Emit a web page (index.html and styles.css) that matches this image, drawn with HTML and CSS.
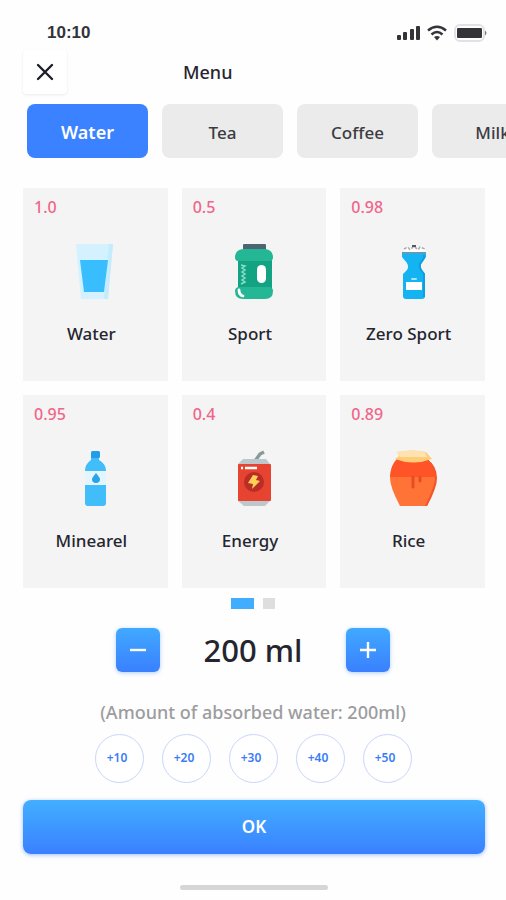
FILE: index.html
```html
<!DOCTYPE html>
<html lang="en">
<head>
	<meta charset="UTF-8">
	<meta name="viewport" content="width=device-width, initial-scale=1.0">
	<title>Menu</title>
	<link rel="stylesheet" href="styles.css">
</head>
<body>

	<!-- Status bar -->
	<div class="status-bar">
		<span class="time">10:10</span>
		<svg class="status-icons" width="92" height="18" viewBox="0 0 92 18" aria-hidden="true">
			<g fill="#333338">
				<rect x="1" y="11" width="4" height="5" rx="1"/>
				<rect x="7" y="8" width="4" height="8" rx="1"/>
				<rect x="14" y="5" width="4" height="11" rx="1"/>
				<rect x="20" y="2" width="4" height="14" rx="1"/>
			</g>
			<g fill="none" stroke="#333338" stroke-width="2.6">
				<path d="M32 6.5Q41 -1 50 6.5"/>
				<path d="M35.5 10.5Q41 5.5 46.5 10.5"/>
			</g>
			<path d="M38 13Q41 11 44 13L41 16.500Z" fill="#333338"/>
			<rect x="59" y="1" width="29" height="16" rx="5" fill="#fff" stroke="#e2e2e6" stroke-width="2"/>
			<rect x="61" y="4" width="25" height="10" rx="1" fill="#333338"/>
			<path d="M89 6.500Q92 9 89 11.500Z" fill="#77777c"/>
		</svg>
	</div>

	<!-- Header -->
	<div class="header">
		<button class="close-btn" aria-label="Close">
			<svg width="18" height="18" viewBox="0 0 18 18"><path d="M2 2L16 16M16 2L2 16" stroke="#1f1f2b" stroke-width="2.400" stroke-linecap="round"/></svg>
		</button>
		<h1>Menu</h1>
	</div>

	<!-- Categories -->
	<div class="tabs">
		<button class="tab active">Water</button>
		<button class="tab">Tea</button>
		<button class="tab">Coffee</button>
		<button class="tab">Milk</button>
	</div>

	<!-- Drinks -->
	<div class="drinks">
		<button class="drink">
			<span class="ratio">1.0</span>
			<svg class="drink-icon" viewBox="0 0 56 56">
				<path d="M9 1H46L41 56H14Z" fill="#d3f1ff"/>
				<path d="M42 1H46L41 56H37Z" fill="#c4ecfd"/>
				<path d="M13 17H41L37 49H17Z" fill="#38bdff"/>
			</svg>
			<span class="name">Water</span>
		</button>
		<button class="drink">
			<span class="ratio">0.5</span>
			<svg class="drink-icon" viewBox="0 0 56 56">
				<rect x="17" y="1" width="23" height="8" rx="1" fill="#4d6570"/>
				<rect x="12" y="12" width="34" height="36" fill="#14a382"/>
				<path d="M17 6H39Q47 7 47 14Q47 18 44 18H12Q9 18 9 14Q9 7 17 6Z" fill="#23b795"/>
				<path d="M12 44H44Q47 45 47 48Q47 56 39 56H17Q9 56 9 48Q9 45 12 44Z" fill="#23b795"/>
				<rect x="31" y="22" width="9" height="18" rx="4.500" fill="#fff"/>
				<path d="M15 22L19 23L16 25L19 27L16 29L19 31L16 33L19 35L16 37L19 39L15 41" fill="none" stroke="#8ae0cd" stroke-width="1.500"/>
				<path d="M13 47Q13 52 17 53" fill="none" stroke="#fff" stroke-width="2.800" stroke-linecap="round"/>
			</svg>
			<span class="name">Sport</span>
		</button>
		<button class="drink">
			<span class="ratio">0.98</span>
			<svg class="drink-icon" viewBox="0 0 56 56">
				<path d="M18 9H41L39 5H20Z" fill="#fff"/>
				<path d="M19 6L23 4L25 7L29 3L33 7L35 4L40 6" fill="none" stroke="#a8abad" stroke-width="1.500" stroke-dasharray="3 2"/>
				<path d="M27 3H31" stroke="#55585c" stroke-width="2"/>
				<path d="M17 9H41V14L36 21Q35 24 37 27L40 31V53Q40 56 37 56H21Q18 56 18 53V31L22 27Q24 24 22 20L17 14Z" fill="#14b4f3"/>
				<path d="M39 12V15L35 21Q34 24 36 27L39 31V54" fill="none" stroke="#0d9fdf" stroke-width="2"/>
				<rect x="17" y="9" width="24" height="2" fill="#5a9dbd"/>
				<rect x="21" y="39" width="16" height="8" fill="#fff"/>
				<rect x="26" y="35" width="6" height="2" rx="1" fill="#a7e4fa"/>
			</svg>
			<span class="name">Zero Sport</span>
		</button>
		<button class="drink">
			<span class="ratio">0.95</span>
			<svg class="drink-icon" viewBox="0 0 56 56">
				<path d="M24 7H32V10Q39 14 39 21V53Q39 56 36 56H21Q18 56 18 53V21Q18 14 24 10Z" fill="#41bdf9"/>
				<rect x="24" y="1" width="9" height="7" rx="1.500" fill="#219ee6"/>
				<rect x="18" y="21" width="21" height="14" fill="#e3f6ff"/>
				<path d="M29 23Q25 28 25 29A4 4 0 0 0 33 29Q33 28 29 23Z" fill="#28a4ea"/>
			</svg>
			<span class="name">Minearel</span>
		</button>
		<button class="drink">
			<span class="ratio">0.4</span>
			<svg class="drink-icon" viewBox="0 0 56 56">
				<path d="M29 11L34 4L38 2" fill="none" stroke="#879b9c" stroke-width="3.500"/>
				<path d="M17 9H40L44 14V51L39 56H18L12 51V14Z" fill="#bdc8cc"/>
				<rect x="12" y="14" width="33" height="37" rx="1" fill="#e64431"/>
				<circle cx="28" cy="32" r="10" fill="#b92d26"/>
				<path d="M27 25L22 33L27 34L26 39L34 31L30 30L32 26Z" fill="#ffd057"/>
				<path d="M15 18H17M19 18H31" stroke="#fff" stroke-width="2.500"/>
			</svg>
			<span class="name">Energy</span>
		</button>
		<button class="drink">
			<span class="ratio">0.89</span>
			<svg class="drink-icon" viewBox="0 0 56 56">
				<path d="M12 9H42Q51 16 51 28Q51 37 42 56H15Q5 37 5 28Q5 16 12 9Z" fill="#ff7436"/>
				<path d="M12 9H42Q51 16 51 27H5Q6 15 12 9Z" fill="#ff5428"/>
				<path d="M42 10Q51 17 50 29Q49 38 40 56H42Q52 38 52 28Q52 16 42 9Z" fill="#f5542a"/>
				<path d="M28 27V37M35 27V31" stroke="#eb4b24" stroke-width="3" stroke-linecap="round"/>
				<path d="M12 2Q28 -1 41 2L47 9Q28 16 10 9L14 6Z" fill="#ffcc79"/>
				<path d="M12 2Q28 -1 40 2L42 7H15Z" fill="#fee3b1"/>
			</svg>
			<span class="name">Rice</span>
		</button>
	</div>

	<!-- Pager -->
	<div class="pager">
		<span class="dot current"></span>
		<span class="dot"></span>
	</div>

	<!-- Amount -->
	<div class="stepper">
		<button class="step-btn" aria-label="Less">
			<svg width="18" height="18" viewBox="0 0 18 18"><path d="M1 9H17" stroke="#fff" stroke-width="2.400"/></svg>
		</button>
		<output class="amount">200 ml</output>
		<button class="step-btn" aria-label="More">
			<svg width="18" height="18" viewBox="0 0 18 18"><path d="M1 9H17M9 1V17" stroke="#fff" stroke-width="2.400"/></svg>
		</button>
	</div>
	<p class="absorbed">(Amount of absorbed water: 200ml)</p>

	<div class="quick-add">
		<button>+10</button>
		<button>+20</button>
		<button>+30</button>
		<button>+40</button>
		<button>+50</button>
	</div>

	<div class="footer">
		<button class="ok-btn">OK</button>
		<div class="home-bar"></div>
	</div>

</body>
</html>
```
FILE: styles.css
```css
* {
	box-sizing: border-box;
}

body {
	margin: 0;
	background-color: #fefefe;
	color: #25252f;
	font-family: "Noto Sans", sans-serif;
	font-size: 17px;
	overflow-x: hidden;
}

button {
	border: none;
	padding: 0;
	font-family: inherit;
	font-size: inherit;
	color: inherit;
	cursor: pointer;
}

svg {
	display: block;
}

/* Status bar */
.status-bar {
	display: flex;
	justify-content: space-between;
	align-items: center;
	height: 50px;
	padding: 16px 18px 0 47px;
}

.time {
	font-family: "Liberation Sans", sans-serif;
	font-weight: bold;
	color: #333338;
}

/* Header */
.header {
	display: flex;
	align-items: center;
	gap: 116px;
	padding: 0 23px;
}

.close-btn {
	display: flex;
	justify-content: center;
	align-items: center;
	width: 44px;
	height: 44px;
	border-radius: 4px;
	background-color: #fff;
	box-shadow: 0 1px 3px rgba(0, 0, 0, 0.08);
}

h1 {
	margin: 0;
	font-size: 18px;
	font-weight: 500;
}

/* Categories */
.tabs {
	display: flex;
	gap: 14px;
	padding: 10px 0 0 27px;
	overflow: hidden;
}

.tab {
	flex: 0 0 121px;
	height: 54px;
	padding-top: 2px;
	border-radius: 8px;
	background-color: #ebebeb;
	color: #3b3b42;
	font-weight: 500;
}

.tab.active {
	background-color: #3a82ff;
	color: #fff;
	font-size: 18px;
	font-weight: 600;
}

/* Drinks */
.drinks {
	display: grid;
	grid-template-columns: repeat(3, 1fr);
	gap: 14px;
	padding: 30px 21px 0 23px;
}

.drink {
	display: flex;
	flex-direction: column;
	align-items: center;
	min-height: 193px;
	padding: 8px 11px;
	background-color: #f4f4f4;
}

.ratio {
	align-self: flex-start;
	line-height: 22px;
	font-size: 16px;
	font-weight: 500;
	color: #f0668a;
}

.drink-icon {
	width: 56px;
	height: 56px;
	margin: 25px 0 23px;
}

.name {
	padding-right: 8px;
	line-height: 24px;
	font-weight: 500;
	white-space: nowrap;
}

/* Pager */
.pager {
	display: flex;
	justify-content: center;
	gap: 9px;
	padding-top: 10px;
}

.dot {
	width: 12px;
	height: 11px;
	background-color: #dedede;
}

.dot.current {
	width: 23px;
	background-color: #40adff;
}

/* Amount */
.stepper {
	display: flex;
	justify-content: center;
	align-items: center;
	padding-top: 19px;
}

.step-btn {
	display: flex;
	justify-content: center;
	align-items: center;
	width: 44px;
	height: 44px;
	border-radius: 6px;
	background: linear-gradient(#40a9ff, #3a80ff);
	box-shadow: 0 1px 4px rgba(58, 130, 255, 0.4);
}

.amount {
	width: 186px;
	font-size: 31px;
	line-height: 40px;
	font-weight: 500;
	text-align: center;
}

.absorbed {
	margin: 28px 0 10px;
	line-height: 24px;
	font-size: 18px;
	font-weight: 500;
	color: #9c9c9f;
	text-align: center;
}

.quick-add {
	display: flex;
	justify-content: center;
	gap: 18px;
}

.quick-add button {
	width: 49px;
	height: 49px;
	padding: 0 4px 3px 0;
	border: 1px solid #c9d5fb;
	border-radius: 50%;
	background-color: #fff;
	color: #3a7cf5;
	font-size: 12px;
	font-weight: 600;
}

/* Footer */
.footer {
	padding: 17px 21px 10px 23px;
}

.ok-btn {
	display: block;
	width: 100%;
	height: 54px;
	padding-bottom: 2px;
	border-radius: 8px;
	background: linear-gradient(to top, #3a80ff, #42afff);
	box-shadow: 0 1px 4px rgba(58, 130, 255, 0.5);
	color: #fff;
	font-weight: 600;
}

.home-bar {
	width: 148px;
	height: 5px;
	margin: 31px auto 0;
	border-radius: 3px;
	background-color: #d6d6d6;
}
```
